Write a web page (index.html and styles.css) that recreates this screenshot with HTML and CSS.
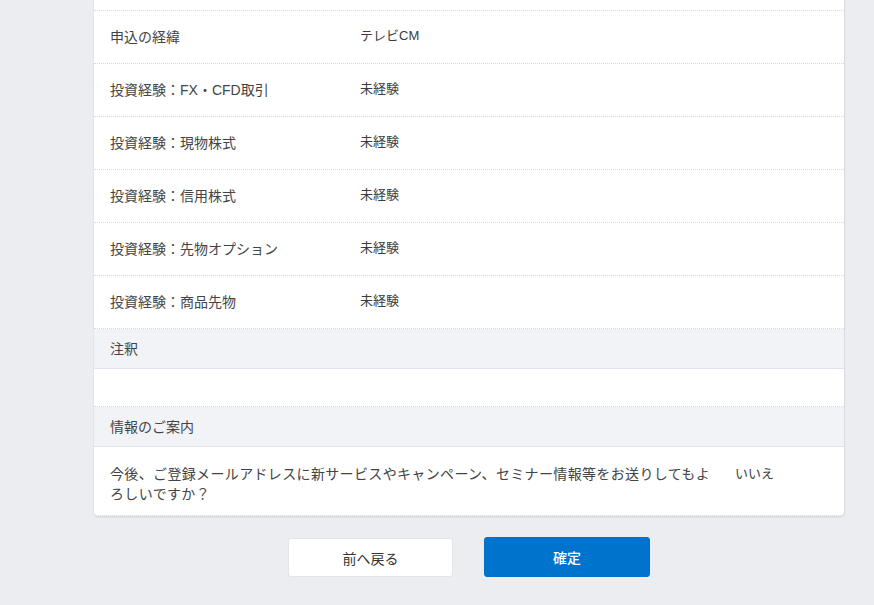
FILE: index.html
```html
<!DOCTYPE html>
<html lang="ja">
<head>
<meta charset="utf-8">
<title>確認</title>
<link rel="stylesheet" href="styles.css">
</head>
<body>
<div class="page">
  <div class="card">
    <div class="row-tail"></div>
    <div class="row"><div class="label">申込の経緯</div><div class="value">テレビCM</div></div>
    <div class="row"><div class="label">投資経験：FX・CFD取引</div><div class="value">未経験</div></div>
    <div class="row"><div class="label">投資経験：現物株式</div><div class="value">未経験</div></div>
    <div class="row"><div class="label">投資経験：信用株式</div><div class="value">未経験</div></div>
    <div class="row"><div class="label">投資経験：先物オプション</div><div class="value">未経験</div></div>
    <div class="row"><div class="label">投資経験：商品先物</div><div class="value">未経験</div></div>
    <div class="section">注釈</div>
    <div class="row empty"></div>
    <div class="section">情報のご案内</div>
    <div class="row wide last"><div class="label">今後、ご登録メールアドレスに新サービスやキャンペーン、セミナー情報等をお送りしてもよろしいですか？</div><div class="value">いいえ</div></div>
  </div>
  <div class="actions">
    <button class="btn btn-back">前へ戻る</button>
    <button class="btn btn-ok">確定</button>
  </div>
</div>
</body>
</html>
```

FILE: styles.css
```css
html, body {
  margin: 0;
  padding: 0;
  background: #ecedf0;
  font-family: "Liberation Sans", "Noto Sans CJK JP", sans-serif;
  color: #3a3a3a;
}
.page {
  width: 750px;
  margin: 0 0 0 94px;
  padding-bottom: 40px;
}
.card {
  background: #fff;
  border-radius: 0 0 4px 4px;
  box-shadow: 0 1px 2px rgba(40, 50, 70, 0.14), 1px 0 1px rgba(40, 50, 70, 0.06);
}
.row-tail {
  height: 10px;
  border-bottom: 1px dotted #d6d9de;
}
.row {
  display: flex;
  align-items: flex-start;
  padding: 16px 16px 15px;
  border-bottom: 1px dotted #d6d9de;
}
.label {
  width: 250px;
  flex: none;
  font-size: 14px;
  line-height: 21px;
  color: #444;
}
.value {
  font-size: 13px;
  line-height: 18px;
  color: #3c3c3c;
}
.row.empty {
  height: 5px;
  padding: 16px;
}
.section {
  background: #f2f3f7;
  padding: 0 16px;
  height: 39px;
  line-height: 40px;
  font-size: 14px;
  color: #444;
  border-bottom: 1px solid #dfe4ec;
}
.row.wide {
  padding: 17px 16px 11px;
}
.row.wide .label {
  width: 605px;
  line-height: 20px;
  letter-spacing: 0.35px;
}
.row.wide .value {
  padding-left: 20px;
  padding-top: 1px;
}
.row.last {
  border-radius: 0 0 4px 4px;
}
.actions {
  display: flex;
  justify-content: center;
  gap: 31px;
  margin-top: 21px;
}
.btn {
  width: 165px;
  height: 40px;
  border-radius: 3px;
  font-family: "Liberation Sans", "Noto Sans CJK JP", sans-serif;
  font-size: 14px;
  cursor: pointer;
}
.btn-back {
  background: #fff;
  border: 1px solid #e1e4e9;
  color: #333;
  height: 39px;
  margin-top: 1px;
}
.btn-ok {
  background: #0073cc;
  border: 1px solid #0070c8;
  color: #fff;
  font-weight: 500;
  width: 166px;
}
```
